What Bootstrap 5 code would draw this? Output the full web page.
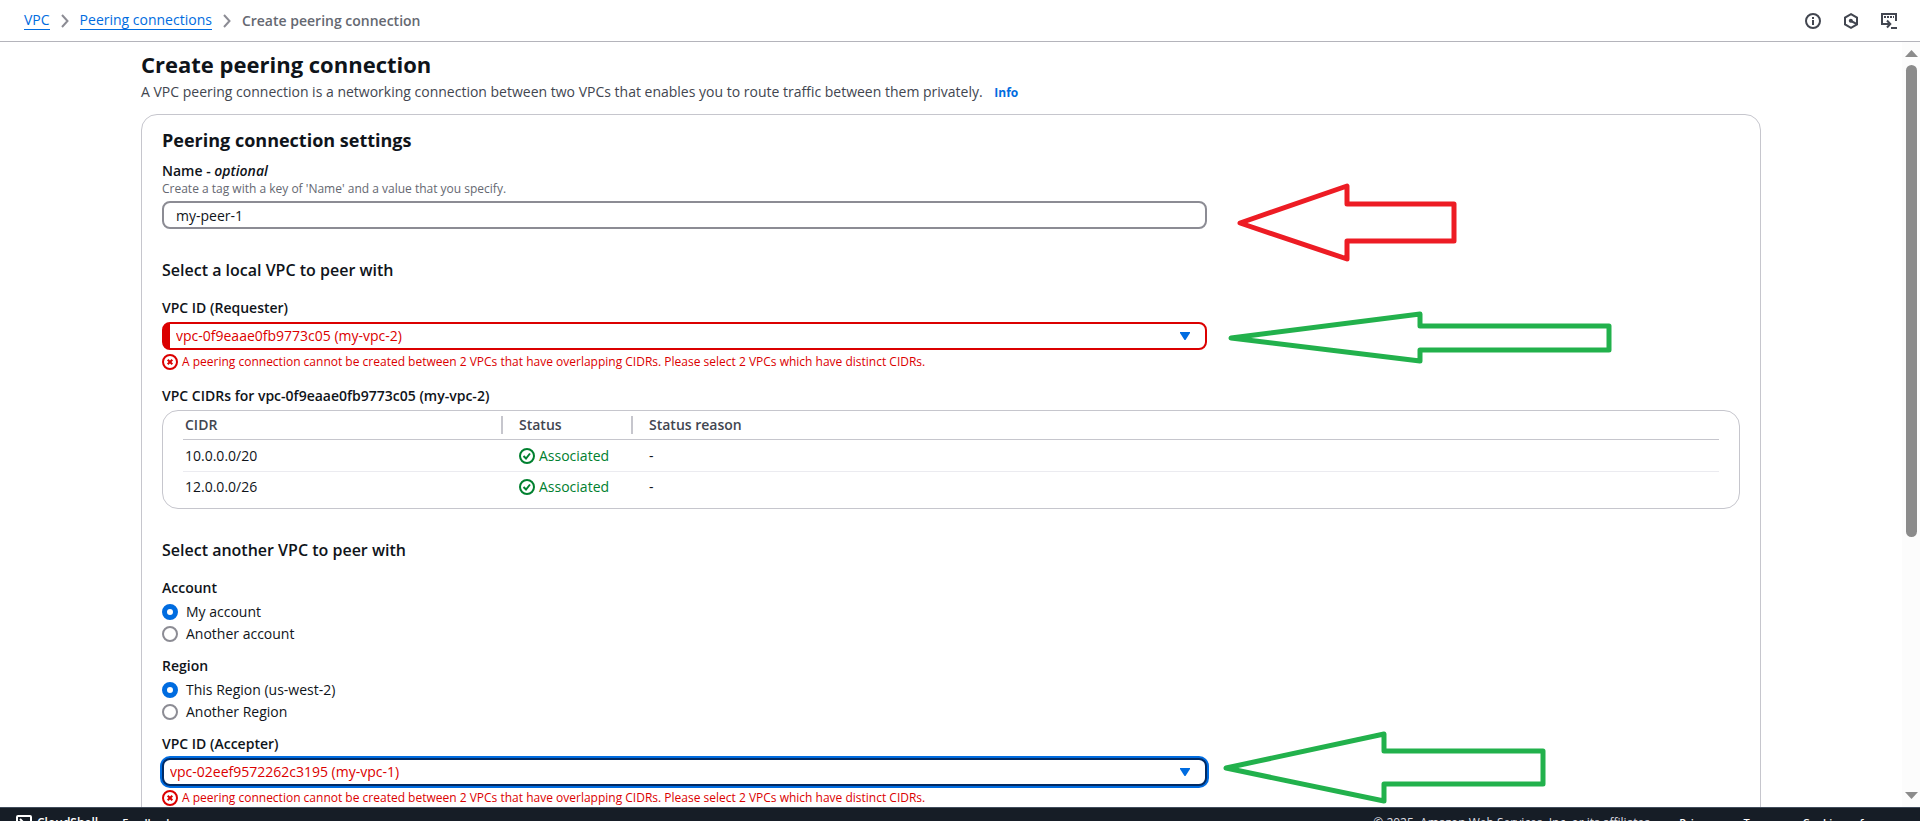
<!DOCTYPE html>
<html lang="en">
<head>
<meta charset="utf-8">
<meta name="viewport" content="width=device-width, initial-scale=1">
<title>Create peering connection | VPC</title>
<link href="https://cdn.jsdelivr.net/npm/bootstrap@5.3.0/dist/css/bootstrap.min.css" rel="stylesheet">
<style>
  :root { --ink: #0f141a; --ink-soft: #424650; --hint: #656871; --blue: #006ce0; --red: #db0000; --green: #00802f; --line: #c6c6cd; --field: #8c8c94; }
  body { font-family: "Open Sans", "Noto Sans", sans-serif; font-size: 14px; line-height: 20px; color: var(--ink); height: 100vh; overflow: hidden; }
  svg { display: block; flex: none; }
  .topbar { height: 42px; border-bottom: 1px solid #b4b4bb; padding: 0 23px 0 24px; }
  .crumbs { gap: 11px; }
  .crumbs a { color: var(--blue); text-decoration: none; border-bottom: 1px solid var(--blue); line-height: 18px; display: block; }
  .crumbs .current { color: var(--hint); font-weight: 600; }
  .tools { gap: 22px; }
  .tool { border: 0; background: none; padding: 0; color: var(--ink-soft); }
  .viewport { height: calc(100vh - 56px); }
  .viewport-body { overflow: hidden; }
  .page { max-width: 1620px; }
  .page-title { font-size: 22px; line-height: 30px; font-weight: 700; padding-top: 7px; }
  .page-note { color: var(--ink-soft); padding-top: 3px; margin-bottom: 11px; }
  .info-link { font-size: 12px; font-weight: 700; color: var(--blue); text-decoration: none; }
  .panel { border: 1px solid var(--line); border-radius: 16px; padding: 13px 20px 20px; }
  .panel-title { font-size: 18px; line-height: 24px; font-weight: 700; margin-bottom: 9px; }
  .section-title { font-size: 16px; line-height: 20px; font-weight: 600; margin: 31px 0 18px; }
  .field-label { font-size: 14px; font-weight: 600; display: block; line-height: 20px; }
  .group { margin-top: 12px; }
  .hint { font-size: 12px; line-height: 16px; color: var(--hint); }
  .fields { --bs-gutter-x: 20px; }
  .field { position: relative; }
  .field input, .field select { display: block; width: 100%; height: 28px; border: 2px solid var(--field); border-radius: 8px; background: #fff; color: var(--ink); padding: 0 12px; line-height: 20px; outline: 0; appearance: none; }
  .field select { color: var(--red); border-color: var(--red); }
  .field select.invalid { border-left-width: 8px; padding-left: 6px; }
  .field select.focused { border-color: #002b66; box-shadow: 0 0 0 2px var(--blue); padding-left: 6px; }
  .caret { position: absolute; right: 17px; top: 10px; pointer-events: none; }
  .pointer { position: absolute; left: 100%; pointer-events: none; fill: none; stroke-width: 5; stroke-linejoin: round; }
  .pointer-name { top: -19px; stroke: #ed1c24; }
  .pointer-requester { top: -12px; stroke: #22b14c; }
  .pointer-accepter { top: -28px; stroke: #22b14c; }
  .error { color: var(--red); font-size: 12px; line-height: 16px; gap: 4px; margin-top: 4px; }
  .table-box { border: 1px solid var(--line); border-radius: 16px; padding: 0 20px 6px; }
  .cidrs { width: 100%; table-layout: fixed; border-collapse: separate; border-spacing: 0; }
  .col-cidr { width: 320px; }
  .col-status { width: 130px; }
  .cidrs th { color: var(--ink-soft); font-weight: 600; height: 29px; padding: 0; border-bottom: 1px solid var(--line); }
  .cidrs th div { border-right: 2px solid var(--line); line-height: 18px; }
  .cidrs th:last-child div { border: 0; }
  .cidrs td { height: 30px; padding: 0; }
  .cidrs tbody tr:first-child td { height: 32px; border-bottom: 1px solid #ebebf0; }
  .cidrs th:first-child div, .cidrs td:first-child { padding-left: 2px; }
  .cidrs th + th div, .cidrs td + td { padding-left: 16px; }
  .ok { color: var(--green); gap: 4px; }
  .choice { gap: 8px; line-height: 20px; }
  .choice + .choice { margin-top: 2px; }
  .choice input { appearance: none; width: 16px; height: 16px; margin: 0; border: 2px solid var(--field); border-radius: 50%; background: #fff; flex: none; }
  .choice input:checked { border: 5px solid var(--blue); }
  .rail { width: 18px; background: #fcfcfc; padding: 8px 0; color: #8b8b8b; }
  .thumb { width: 11px; height: 63%; border-radius: 6px; background: #8b8b8b; margin-top: 8px; }
  .bottombar { height: 30px; background: #161d26; border-top: 1px solid #414d5c; color: #dedee3; font-size: 12px; line-height: 16px; padding: 0 15px 0 16px; }
  .bottombar a { color: #fff; font-size: 11px; font-weight: 600; text-decoration: none; }
  .bottombar button { color: #fff; font-size: 12px; font-weight: 600; border: 0; background: none; padding: 0; gap: 5px; }
  .bottombar-start { gap: 24px; }
  .bottombar-end { gap: 26px; }
</style>
</head>
<body>
<header class="topbar d-flex align-items-center justify-content-between">
  <nav aria-label="breadcrumb">
    <ol class="crumbs d-flex align-items-center list-unstyled mb-0">
      <li><a href="#">VPC</a></li>
      <li aria-hidden="true"><svg width="8" height="14" viewBox="0 0 8 14" fill="none" stroke="#8c8c94" stroke-width="2"><path d="M1 1l5.500 6L1 13"/></svg></li>
      <li><a href="#">Peering connections</a></li>
      <li aria-hidden="true"><svg width="8" height="14" viewBox="0 0 8 14" fill="none" stroke="#8c8c94" stroke-width="2"><path d="M1 1l5.500 6L1 13"/></svg></li>
      <li class="current" aria-current="page">Create peering connection</li>
    </ol>
  </nav>
  <div class="tools d-flex">
    <button class="tool" type="button" aria-label="Info"><svg width="16" height="16" viewBox="0 0 16 16" fill="none" stroke="currentColor" stroke-width="2"><circle cx="8" cy="8" r="7"/><path d="M8 4v2M8 7v5"/></svg></button>
    <button class="tool" type="button" aria-label="Diagnostics"><svg width="16" height="16" viewBox="0 0 16 16" fill="none" stroke="currentColor" stroke-width="2"><path d="M8 1.200l6 3.400v6.800l-6 3.400-6-3.400V4.600z"/><path d="M8 8l5.500 2.800"/><circle cx="7.800" cy="7.800" r="2" fill="currentColor" stroke="none"/></svg></button>
    <button class="tool" type="button" aria-label="CloudShell"><svg width="16" height="16" viewBox="0 0 16 16" fill="none" stroke="currentColor" stroke-width="2"><path d="M5 11H1V1h14v7M10 15h6M4 11h5M6 7.500L9.300 11 6 14.500"/><path d="M3 4h10" stroke-dasharray="2 1"/></svg></button>
  </div>
</header>

<div class="viewport d-flex">
  <main class="viewport-body flex-grow-1">
    <div class="page mx-auto">
      <h1 class="page-title mb-0">Create peering connection</h1>
      <p class="page-note">A VPC peering connection is a networking connection between two VPCs that enables you to route traffic between them privately. <a class="info-link ms-2" href="#">Info</a></p>

      <form class="panel">
        <h2 class="panel-title">Peering connection settings</h2>
        <div class="row fields">
          <div class="col-8">
            <label class="field-label" for="peer-name">Name - <i>optional</i></label>
            <div class="hint mb-1">Create a tag with a key of 'Name' and a value that you specify.</div>
            <div class="field">
              <input id="peer-name" type="text" value="my-peer-1">
              <svg class="pointer pointer-name" width="260" height="80" viewBox="0 0 260 80"><path d="M33 41L140 4V22H247V59H140V77Z"/></svg>
            </div>

            <h3 class="section-title">Select a local VPC to peer with</h3>

            <label class="field-label" for="requester">VPC ID (Requester)</label>
            <div class="field mt-1">
              <select id="requester" class="invalid"><option>vpc-0f9eaae0fb9773c05 (my-vpc-2)</option></select>
              <svg class="caret" width="10" height="8" viewBox="0 0 10 8" fill="#006ce0"><path d="M0 0h10v1L5.500 8h-1L0 1z"/></svg>
              <svg class="pointer pointer-requester" width="410" height="56" viewBox="0 0 410 56"><path d="M24 28L213 4V16H402V40H213V51Z"/></svg>
            </div>
            <div class="error d-flex align-items-center"><svg width="16" height="16" viewBox="0 0 16 16" fill="none" stroke="currentColor" stroke-width="2"><circle cx="8" cy="8" r="7"/><path d="M5.700 5.700l4.600 4.600M10.300 5.700l-4.600 4.600"/></svg>A peering connection cannot be created between 2 VPCs that have overlapping CIDRs. Please select 2 VPCs which have distinct CIDRs.</div>
          </div>
        </div>

        <div class="field-label mt-3">VPC CIDRs for vpc-0f9eaae0fb9773c05 (my-vpc-2)</div>
        <div class="table-box mt-1">
          <table class="cidrs">
            <colgroup><col class="col-cidr"><col class="col-status"><col></colgroup>
            <thead><tr><th scope="col"><div>CIDR</div></th><th scope="col"><div>Status</div></th><th scope="col"><div>Status reason</div></th></tr></thead>
            <tbody>
              <tr><td>10.0.0.0/20</td><td><div class="ok d-flex align-items-center"><svg width="16" height="16" viewBox="0 0 16 16" fill="none" stroke="currentColor" stroke-width="2"><circle cx="8" cy="8" r="7"/><path d="M4.500 8l2.500 2.500L11 5.500"/></svg>Associated</div></td><td>-</td></tr>
              <tr><td>12.0.0.0/26</td><td><div class="ok d-flex align-items-center"><svg width="16" height="16" viewBox="0 0 16 16" fill="none" stroke="currentColor" stroke-width="2"><circle cx="8" cy="8" r="7"/><path d="M4.500 8l2.500 2.500L11 5.500"/></svg>Associated</div></td><td>-</td></tr>
            </tbody>
          </table>
        </div>

        <h3 class="section-title">Select another VPC to peer with</h3>

        <fieldset>
          <legend class="field-label mb-1">Account</legend>
          <label class="choice d-flex align-items-center"><input type="radio" name="account" checked>My account</label>
          <label class="choice d-flex align-items-center"><input type="radio" name="account">Another account</label>
        </fieldset>
        <fieldset class="group">
          <legend class="field-label mb-1">Region</legend>
          <label class="choice d-flex align-items-center"><input type="radio" name="region" checked>This Region (us-west-2)</label>
          <label class="choice d-flex align-items-center"><input type="radio" name="region">Another Region</label>
        </fieldset>

        <div class="row fields group">
          <div class="col-8">
            <label class="field-label" for="accepter">VPC ID (Accepter)</label>
            <div class="field mt-1">
              <select id="accepter" class="focused"><option>vpc-02eef9572262c3195 (my-vpc-1)</option></select>
              <svg class="caret" width="10" height="8" viewBox="0 0 10 8" fill="#006ce0"><path d="M0 0h10v1L5.500 8h-1L0 1z"/></svg>
              <svg class="pointer pointer-accepter" width="350" height="76" viewBox="0 0 350 76"><path d="M19 38L177 4V21H336V54H177V71Z"/></svg>
            </div>
            <div class="error d-flex align-items-center"><svg width="16" height="16" viewBox="0 0 16 16" fill="none" stroke="currentColor" stroke-width="2"><circle cx="8" cy="8" r="7"/><path d="M5.700 5.700l4.600 4.600M10.300 5.700l-4.600 4.600"/></svg>A peering connection cannot be created between 2 VPCs that have overlapping CIDRs. Please select 2 VPCs which have distinct CIDRs.</div>
          </div>
        </div>
      </form>
    </div>
  </main>
  <div class="rail d-flex flex-column align-items-center" aria-hidden="true">
    <svg width="13" height="7" viewBox="0 0 13 7" fill="currentColor"><path d="M6.500 0L13 7H0z"/></svg>
    <div class="thumb"></div>
    <svg class="mt-auto" width="13" height="7" viewBox="0 0 13 7" fill="currentColor"><path d="M0 0h13L6.500 7z"/></svg>
  </div>
</div>

<footer class="bottombar d-flex align-items-center justify-content-between">
  <div class="bottombar-start d-flex align-items-center">
    <button type="button" class="d-flex align-items-center"><svg width="16" height="16" viewBox="0 0 16 16" fill="none" stroke="currentColor" stroke-width="2"><rect x="1" y="1" width="14" height="14" rx="1"/><path d="M4 4l4 4-4 4M9 12h3"/></svg>CloudShell</button>
    <a href="#">Feedback</a>
  </div>
  <div class="bottombar-end d-flex align-items-center">
    <span>© 2025, Amazon Web Services, Inc. or its affiliates.</span>
    <a href="#">Privacy</a>
    <a href="#">Terms</a>
    <a href="#">Cookie preferences</a>
  </div>
</footer>
<script src="https://cdn.jsdelivr.net/npm/bootstrap@5.3.0/dist/js/bootstrap.bundle.min.js"></script>
</body>
</html>
